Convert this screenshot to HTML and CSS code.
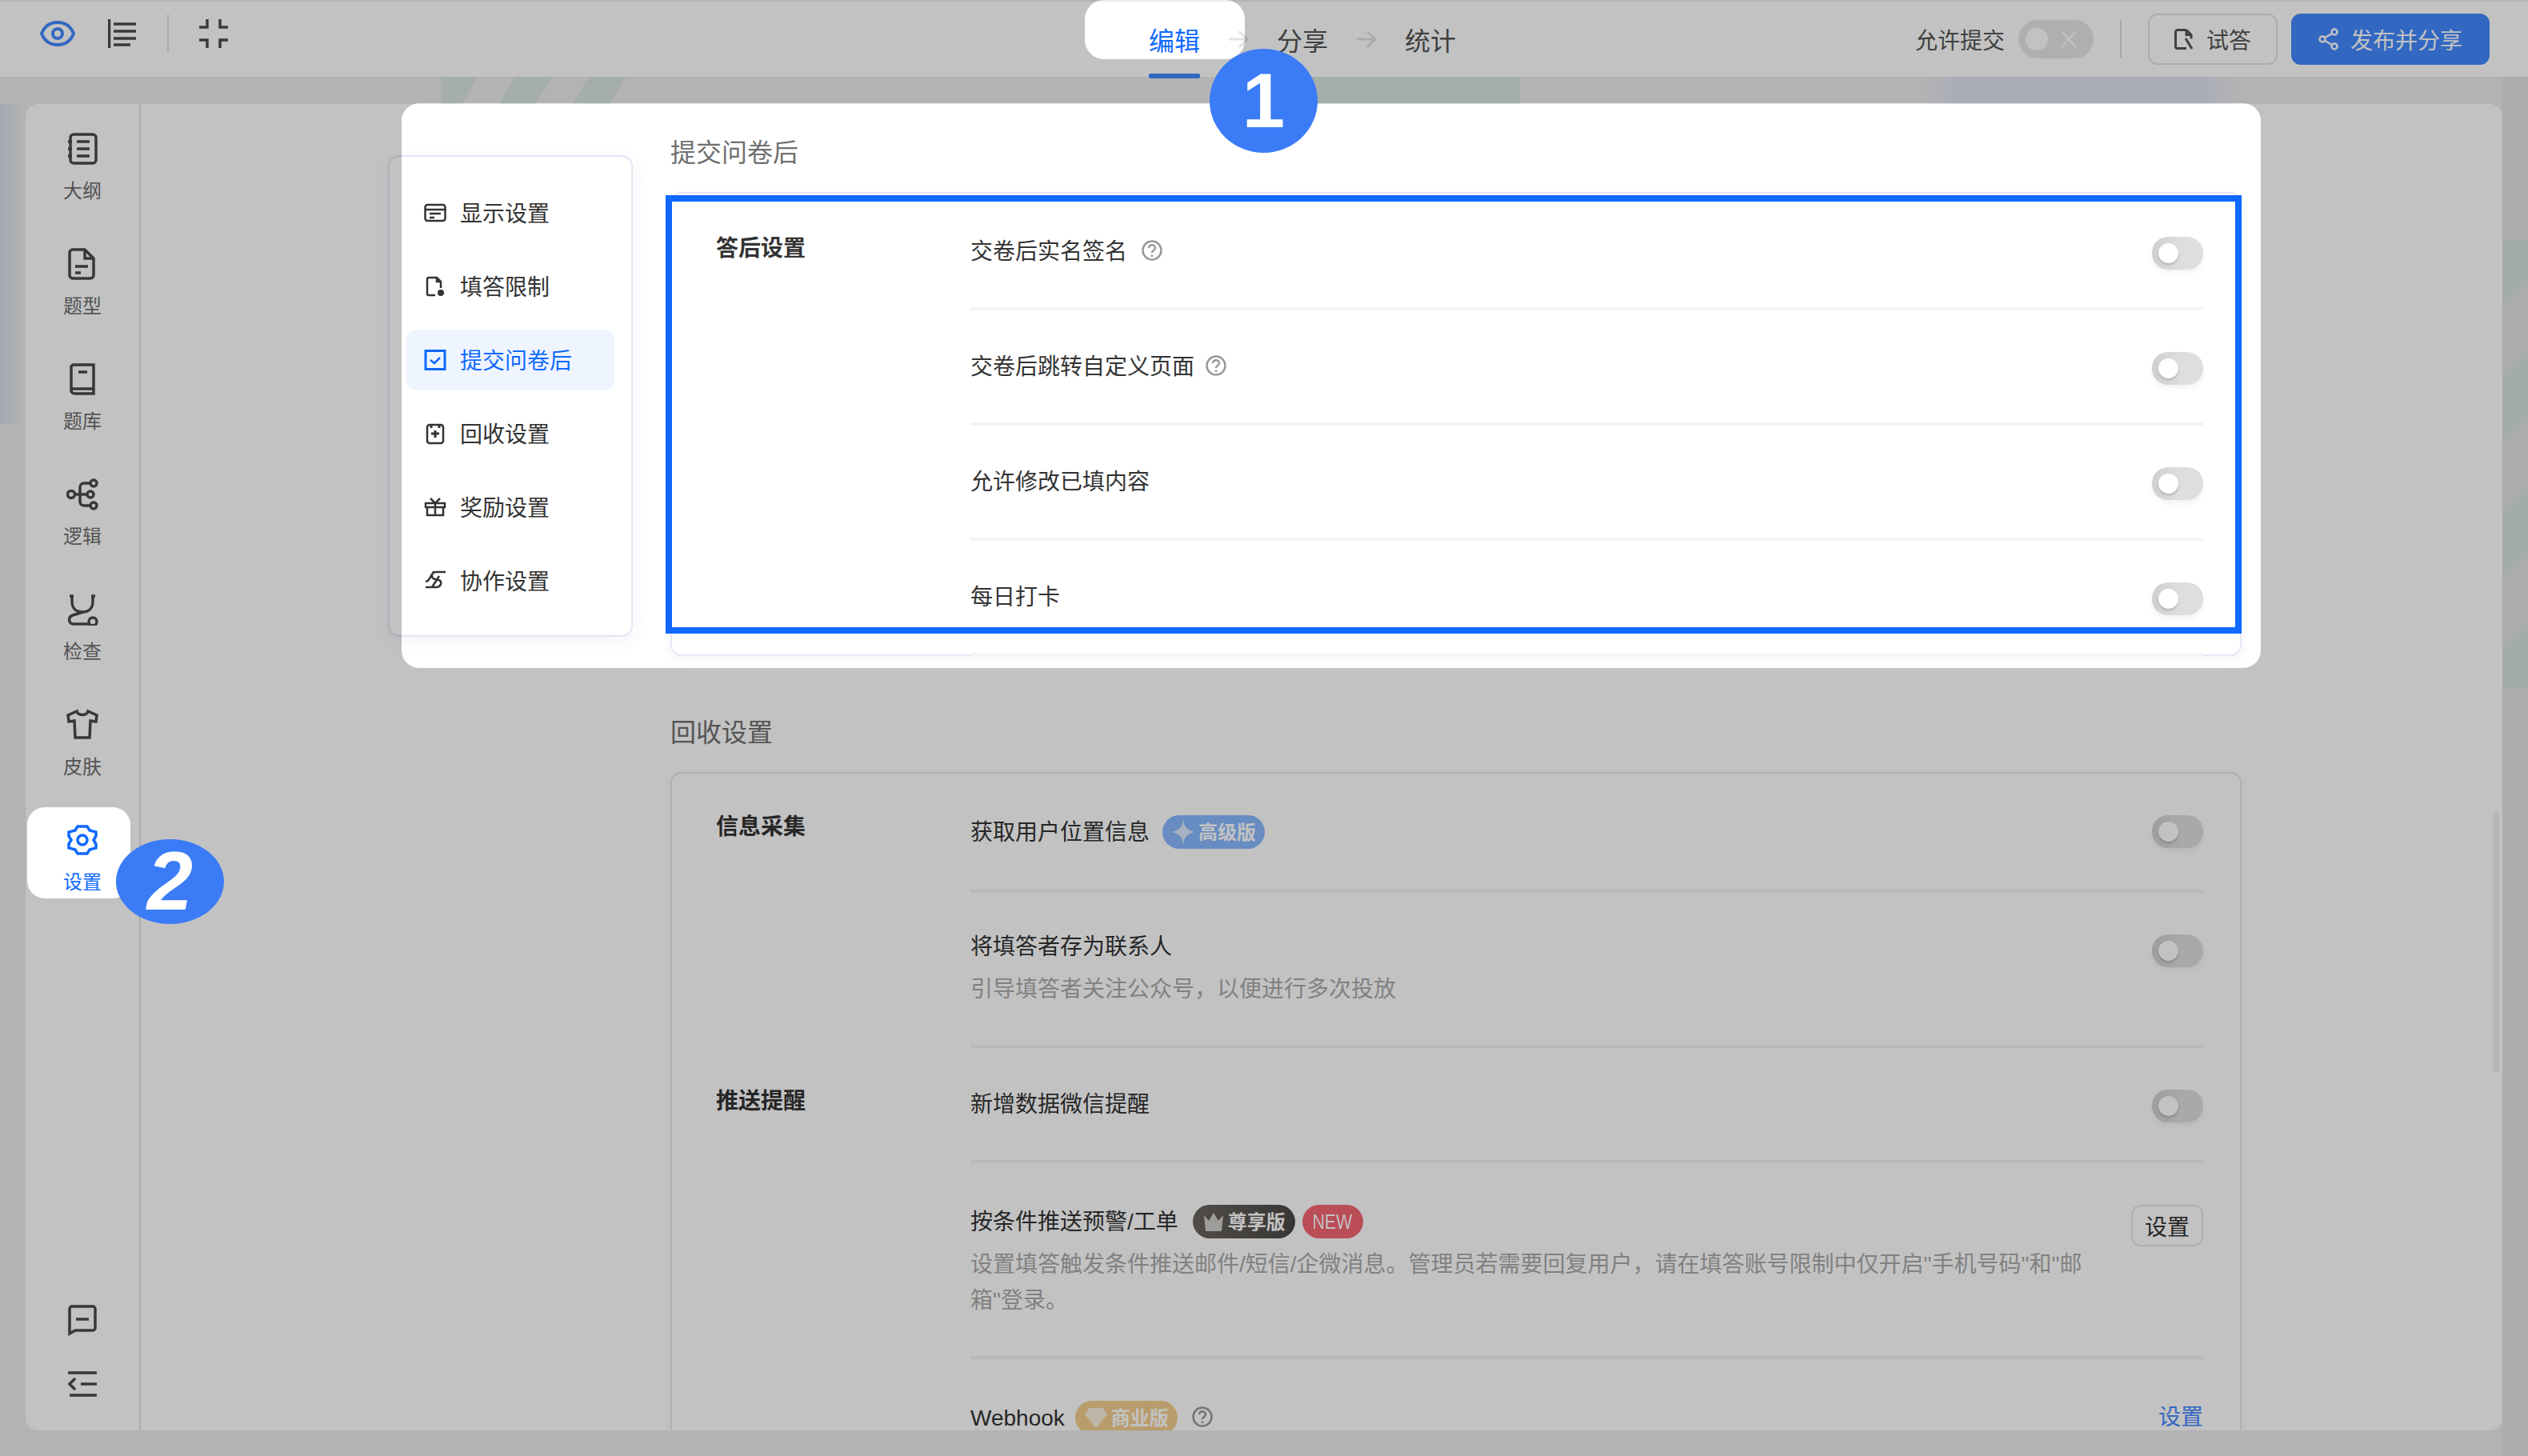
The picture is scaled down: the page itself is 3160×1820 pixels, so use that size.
FILE: index.html
```html
<!DOCTYPE html>
<html lang="zh-CN">
<head>
    <meta charset="UTF-8">
    <title>问卷设置</title>
    <link rel="stylesheet" href="styles.css">
</head>
<body>

<header class="topbar">
    <div class="topbar-left">
        <svg class="tool tool-eye" width="44" height="32" viewBox="0 0 44 32"><path d="M2 16C6 6 13 2 22 2s16 4 20 14c-4 10-11 14-20 14S6 26 2 16z"/><circle cx="22" cy="16" r="6"/></svg>
        <svg class="tool tool-outline" width="36" height="36" viewBox="0 0 36 36"><path d="M1.500 0v36M7 6h28M7 15h28M7 24h28M7 32h21" stroke-width="3.500"/></svg>
        <span class="vline"></span>
        <svg class="tool" width="36" height="36" viewBox="0 0 36 36"><path d="M10 0v10H0M26 0v10h10M10 36V26H0M26 36V26h10" stroke-width="3.500"/></svg>
    </div>
    <nav class="tabs">
        <a class="tab tab-active">编辑</a>
        <svg class="tab-arrow" width="24" height="24" viewBox="0 0 24 24"><path d="M0 12h22M13 2l10 10-10 10"/></svg>
        <a class="tab">分享</a>
        <svg class="tab-arrow" width="24" height="24" viewBox="0 0 24 24"><path d="M0 12h22M13 2l10 10-10 10"/></svg>
        <a class="tab">统计</a>
    </nav>
    <div class="topbar-right">
        <span class="allow-label">允许提交</span>
        <span class="allow-switch"><i></i>
            <svg width="24" height="24" viewBox="0 0 24 24"><path d="M3 2l18 20M21 2L3 22"/></svg>
        </span>
        <span class="vline vline-short"></span>
        <button class="btn">
            <svg width="24" height="26" viewBox="0 0 24 26"><path d="M15 1.500H4a2.500 2.500 0 0 0-2.500 2.500v18A2.500 2.500 0 0 0 4 24.500h11M15 1.500l6 6v5M15 1.500v6h6M14 12l8 13" fill="none" stroke="currentColor" stroke-width="3"/></svg>
            试答
        </button>
        <button class="btn btn-primary">
            <svg width="26" height="28" viewBox="0 0 26 28"><g fill="none" stroke="currentColor" stroke-width="2.500"><circle cx="20" cy="5" r="3.500"/><circle cx="5" cy="14" r="3.500"/><circle cx="20" cy="23" r="3.500"/><path d="M8 12l9-5M8 16l9 5"/></g></svg>
            发布并分享
        </button>
    </div>
</header>

<main class="stage">
    <div class="panel">
        <aside class="sidebar">
            <a class="side-item">
                <svg width="40" height="40" viewBox="0 0 40 40"><rect x="5" y="2" width="32" height="36" rx="4"/><path d="M13 11h16M13 20h16M13 29h16M2 11h5M2 20h5M2 29h5"/></svg>
                <span>大纲</span>
            </a>
            <a class="side-item">
                <svg width="40" height="40" viewBox="0 0 40 40"><path d="M8 2h15l11 11v21a4 4 0 0 1-4 4H8a4 4 0 0 1-4-4V6a4 4 0 0 1 4-4zM23 2v11h11M11 23h16M11 31h7"/></svg>
                <span>题型</span>
            </a>
            <a class="side-item">
                <svg width="40" height="40" viewBox="0 0 40 40"><path d="M8 2h26v36H10a4 4 0 0 1-4-4V4zM6 32h28M15 11h11"/></svg>
                <span>题库</span>
            </a>
            <a class="side-item">
                <svg width="40" height="40" viewBox="0 0 40 40"><circle cx="6" cy="20" r="4.500"/><circle cx="34" cy="6" r="4"/><circle cx="30" cy="20" r="4"/><circle cx="34" cy="34" r="4"/><path d="M11 20h15M17 20V11a5 5 0 0 1 5-5h8M17 20v9a5 5 0 0 0 5 5h8"/></svg>
                <span>逻辑</span>
            </a>
            <a class="side-item">
                <svg width="40" height="40" viewBox="0 0 40 40"><path d="M7 2v8c0 9 6 13 13 13s13-4 13-13V2M21 23L8 27c-6 2-6 11 1 11h19"/><circle cx="33" cy="35" r="5"/><path d="M4 3h5M31 3h5"/></svg>
                <span>检查</span>
            </a>
            <a class="side-item">
                <svg width="40" height="40" viewBox="0 0 40 40"><path d="M13 3L2 8l1 8 7-1 1 21h18l1-21 7 1 1-8-11-5c-1 6-13 6-14 0z"/></svg>
                <span>皮肤</span>
            </a>
            <a class="side-item side-active">
                <svg width="40" height="40" viewBox="0 0 40 40"><path d="M14 3h12l3 5 8 2 0 5-3 5 3 5 0 5-8 2-3 5H14l-3-5-8-2 0-5 3-5-3-5 0-5 8-2z"/><circle cx="20" cy="20" r="6"/></svg>
                <span>设置</span>
            </a>
            <div class="side-bottom">
                <svg width="40" height="40" viewBox="0 0 40 40"><path d="M4 6a3 3 0 0 1 3-3h26a3 3 0 0 1 3 3v24a3 3 0 0 1-3 3H11l-7 4zM12 19h16"/></svg>
                <svg width="40" height="40" viewBox="0 0 40 40"><path d="M2 6h36M18 20h20M4 34h34M11 13l-7 7 7 7"/></svg>
            </div>
        </aside>

        <div class="content">
            <ul class="setting-nav">
                <li>
                    <svg width="28" height="28" viewBox="0 0 28 28"><rect x="1.500" y="4" width="25" height="20" rx="3"/><path d="M2 10h24M7 15h14M7 20h6"/></svg>
                    显示设置
                </li>
                <li>
                    <svg width="28" height="28" viewBox="0 0 28 28"><path d="M14 25H6a2 2 0 0 1-2-2V5a2 2 0 0 1 2-2h10l5 5v8M16 3v5h5"/><circle cx="21" cy="22" r="4" class="solid"/></svg>
                    填答限制
                </li>
                <li class="nav-active">
                    <svg width="28" height="28" viewBox="0 0 28 28"><rect x="2" y="2.500" width="24" height="23" stroke-width="3"/><path d="M8 14l5 4 7-7"/></svg>
                    提交问卷后
                </li>
                <li>
                    <svg width="28" height="28" viewBox="0 0 28 28"><rect x="4" y="3" width="20" height="23" rx="3"/><path d="M9 2v5M19 2v5M9 14h10M14 10v9" stroke-width="3"/></svg>
                    回收设置
                </li>
                <li>
                    <svg width="28" height="28" viewBox="0 0 28 28"><path d="M2 9h24v5H2zM4 14v10h20V14M14 9v15M8 3l6 6 6-6"/></svg>
                    奖励设置
                </li>
                <li>
                    <svg width="28" height="28" viewBox="0 0 28 28"><path d="M27 3H15C9 3 8 11 14 12l4 1c5 1 4 8-2 9H2M19 8l-9 14M12 3L5 14l-3 1"/></svg>
                    协作设置
                </li>
            </ul>

            <div class="sections">
                <h2 class="section-title section-first">提交问卷后</h2>
                <section class="card card-first">
                    <div class="group">
                        <div class="group-label">答后设置</div>
                        <div class="group-rows">
                            <div class="row row-first">
                                <div class="row-text"><div class="row-title">交卷后实名签名
                                    <svg class="help help-far" width="26" height="26" viewBox="0 0 26 26"><circle cx="13" cy="13" r="11.500"/><path d="M9 10c0-5 8-5 8 0 0 3-4 3-4 6M13 18.500v2.500"/></svg>
                                </div></div>
                                <span class="switch"><i></i></span>
                            </div>
                            <div class="row">
                                <div class="row-text"><div class="row-title">交卷后跳转自定义页面
                                    <svg class="help" width="26" height="26" viewBox="0 0 26 26"><circle cx="13" cy="13" r="11.500"/><path d="M9 10c0-5 8-5 8 0 0 3-4 3-4 6M13 18.500v2.500"/></svg>
                                </div></div>
                                <span class="switch"><i></i></span>
                            </div>
                            <div class="row">
                                <div class="row-text"><div class="row-title">允许修改已填内容</div></div>
                                <span class="switch"><i></i></span>
                            </div>
                            <div class="row row-end">
                                <div class="row-text"><div class="row-title">每日打卡</div></div>
                                <span class="switch"><i></i></span>
                            </div>
                        </div>
                    </div>
                </section>

                <h2 class="section-title">回收设置</h2>
                <section class="card">
                    <div class="group">
                        <div class="group-label">信息采集</div>
                        <div class="group-rows">
                            <div class="row row-loose">
                                <div class="row-text"><div class="row-title row-badged">获取用户位置信息
                                    <span class="badge badge-pro">
                                        <svg width="30" height="32" viewBox="0 0 30 32"><path d="M15 0c1 10 5 14 15 16-10 2-14 6-15 16-1-10-5-14-15-16C10 14 14 10 15 0z"/></svg>
                                        高级版
                                    </span>
                                </div></div>
                                <span class="switch"><i></i></span>
                            </div>
                            <div class="row">
                                <div class="row-text row-text-desc">
                                    <div class="row-title">将填答者存为联系人</div>
                                    <p class="row-desc">引导填答者关注公众号，以便进行多次投放</p>
                                </div>
                                <span class="switch"><i></i></span>
                            </div>
                        </div>
                    </div>
                    <div class="group">
                        <div class="group-label">推送提醒</div>
                        <div class="group-rows">
                            <div class="row">
                                <div class="row-text"><div class="row-title">新增数据微信提醒</div></div>
                                <span class="switch"><i></i></span>
                            </div>
                            <div class="row">
                                <div class="row-text row-text-wide">
                                    <div class="row-title row-badged">按条件推送预警/工单
                                        <span class="badge badge-vip">
                                            <svg width="28" height="24" viewBox="0 0 28 24"><path d="M2 4l6 7 6-10 6 10 6-7-2 20H4z"/></svg>
                                            尊享版
                                        </span>
                                        <span class="badge badge-new"><span>NEW</span></span>
                                    </div>
                                    <p class="row-desc row-desc-badged">设置填答触发条件推送邮件/短信/企微消息。管理员若需要回复用户，请在填答账号限制中仅开启"手机号码"和"邮箱"登录。</p>
                                </div>
                                <button class="btn-small">设置</button>
                            </div>
                            <div class="row row-last">
                                <div class="row-text"><div class="row-title row-badged">Webhook
                                    <span class="badge badge-biz">
                                        <svg width="30" height="28" viewBox="0 0 30 28"><path d="M6 2h18l5 8-14 17L1 10z"/></svg>
                                        商业版
                                    </span>
                                    <svg class="help help-far" width="26" height="26" viewBox="0 0 26 26"><circle cx="13" cy="13" r="11.500"/><path d="M9 10c0-5 8-5 8 0 0 3-4 3-4 6M13 18.500v2.500"/></svg>
                                </div></div>
                                <a class="row-link">设置</a>
                            </div>
                        </div>
                    </div>
                </section>
            </div>
            <span class="scroll-thumb"></span>
        </div>
    </div>
</main>

<!-- guide layer: dims the page except the three highlighted spots -->
<svg class="dim" width="3160" height="1820" viewBox="0 0 3160 1820">
    <mask id="spots">
        <rect width="3160" height="1820" fill="#fff"/>
        <rect x="1356" y="0" width="200" height="74" rx="24" fill="#000"/>
        <rect x="34" y="1009" width="129" height="114" rx="22" fill="#000"/>
        <rect x="502" y="129" width="2324" height="706" rx="22" fill="#000"/>
    </mask>
    <rect width="3160" height="1820" fill="#000" fill-opacity="0.24" mask="url(#spots)"/>
</svg>
<div class="focus-box"></div>
<div class="step step-one">1</div>
<div class="step step-two">2</div>

</body>
</html>
```

FILE: styles.css
```css
* {
    box-sizing: border-box;
}

html, body {
    height: 100%;
    margin: 0;
    overflow: hidden;
}

body {
    position: relative;
    display: flex;
    flex-direction: column;
    width: 3160px;
    height: 1820px;
    font-family: "Liberation Sans", "Noto Sans CJK SC", sans-serif;
    font-size: 28px;
    color: #333;
    background-color: #ececec;
    background-image:
        linear-gradient(90deg, #d6deec, #ececec00),
        repeating-linear-gradient(120deg, #dbe5e0 0 40px, #dbe5e000 40px 80px),
        linear-gradient(#dbe5e0, #dbe5e0),
        linear-gradient(90deg, #dee4ef00, #dee4ef 12%, #dee4ef 88%, #dee4ef00),
        repeating-linear-gradient(135deg, #d6e2dc 0 60px, #d6e2dc00 60px 120px),
        linear-gradient(90deg, #e2e2e2, #e2e2e2);
    background-size: 32px 400px, 250px 34px, 260px 34px, 400px 34px, 32px 560px, 32px 1724px;
    background-position: 0 130px, 551px 96px, 1640px 96px, 2400px 96px, 3128px 300px, 3128px 96px;
    background-repeat: no-repeat;
}

/* top bar */
.topbar {
    flex: none;
    display: flex;
    align-items: center;
    height: 96px;
    padding: 0 48px 0 50px;
    background: #fff;
    border-top: 2px solid #ededed;
}

.topbar-left {
    flex: 0 0 1386px;
    display: flex;
    align-items: center;
    margin-top: -14px;
}

.tool {
    fill: none;
    stroke: #4c4c4c;
}

.tool-eye {
    stroke: #4489ff;
    stroke-width: 4;
    margin-right: 41px;
}

.tool-outline {
    margin-right: 38px;
}

.vline {
    width: 2px;
    height: 48px;
    margin-right: 38px;
    background: #ddd;
}

.vline-short {
    margin: 0 33px;
}

.tabs {
    display: flex;
    align-items: center;
    gap: 36px;
    align-self: stretch;
    font-size: 32px;
    color: #555;
}

.tab {
    position: relative;
    display: flex;
    align-items: center;
    align-self: stretch;
}

.tab-active {
    color: #0f69ff;
}

.tab-active::after {
    content: "";
    position: absolute;
    left: 0;
    right: 0;
    bottom: -2px;
    height: 6px;
    border-radius: 2px;
    background: #4489ff;
}

.tab-arrow {
    fill: none;
    stroke: #e2e2e2;
    stroke-width: 3;
}

.topbar-right {
    margin-left: auto;
    display: flex;
    align-items: center;
}

.allow-label {
    color: #555;
    margin-right: 17px;
}

.allow-switch {
    position: relative;
    display: flex;
    align-items: center;
    justify-content: space-between;
    width: 94px;
    height: 48px;
    padding: 0 19px 0 9px;
    border-radius: 24px;
    background: #e6e6e6;
}

.allow-switch i {
    width: 28px;
    height: 28px;
    border-radius: 50%;
    background: #fff;
}

.allow-switch svg {
    fill: none;
    stroke: #fff;
    stroke-width: 2.5;
}

.btn {
    display: flex;
    align-items: center;
    justify-content: center;
    gap: 16px;
    width: 162px;
    height: 64px;
    padding: 0;
    font: inherit;
    color: #555;
    background: #fff;
    border: 2px solid #e4e4e4;
    border-radius: 12px;
}

.btn-primary {
    width: 248px;
    margin-left: 17px;
    gap: 14px;
    color: #fff;
    background: #4489ff;
    border-color: #4489ff;
}

/* page frame */
.stage {
    flex: 1;
    min-height: 0;
    padding: 34px 32px 32px;
}

.panel {
    display: flex;
    height: 100%;
    background: #fff;
    border-radius: 16px;
    overflow: hidden;
}

.sidebar {
    flex: 0 0 144px;
    display: flex;
    flex-direction: column;
    align-items: center;
    padding: 15px 0 38px;
    border-right: 2px solid #e4e4e4;
}

.sidebar svg {
    fill: none;
    stroke: #4a4a4a;
    stroke-width: 3.5;
}

.side-item {
    display: flex;
    flex-direction: column;
    align-items: center;
    height: 114px;
    margin-bottom: 30px;
    padding-top: 21px;
    font-size: 24px;
    line-height: 32px;
    color: #6e6e6e;
}

.side-item span {
    margin-top: 17px;
}

.side-active {
    color: #0f69ff;
}

.side-active svg {
    stroke: #0f69ff;
}

.side-bottom {
    margin-top: auto;
    display: flex;
    flex-direction: column;
    gap: 40px;
}

.content {
    position: relative;
    flex: 1;
    min-width: 0;
    display: flex;
    align-items: flex-start;
    padding-left: 309px;
    overflow: hidden;
}

/* settings menu */
.setting-nav {
    flex: 0 0 306px;
    display: flex;
    flex-direction: column;
    gap: 16px;
    margin: 64px 0 0;
    padding: 32px 21px 30px;
    list-style: none;
    background: #fff;
    border: 2px solid #e3e8f4;
    border-radius: 14px;
    box-shadow: 0 6px 24px rgba(40, 60, 120, 0.06);
}

.setting-nav li {
    display: flex;
    align-items: center;
    gap: 17px;
    height: 76px;
    padding-left: 22px;
    padding-bottom: 3px;
    border-radius: 12px;
    color: #333;
}

.setting-nav svg {
    fill: none;
    stroke: #333;
    stroke-width: 2.5;
    margin-top: 3px;
}

.setting-nav .solid {
    fill: #333;
    stroke: none;
}

.setting-nav .nav-active {
    color: #0f69ff;
    background: #eff5ff;
}

.nav-active svg {
    stroke: #0f69ff;
}

/* settings sections */
.sections {
    flex: 0 0 1964px;
    margin-left: 47px;
}

.section-title {
    margin: 75px 0 28px;
    font-size: 32px;
    font-weight: 400;
    line-height: 42px;
    color: #707070;
}

.section-first {
    margin-top: 40px;
}

.card {
    padding-right: 46px;
    background: #fff;
    border: 2px solid #e4e8f4;
    border-radius: 14px;
    box-shadow: 0 4px 12px rgba(40, 60, 120, 0.05);
}

.group {
    display: flex;
}

.group-label {
    flex: 0 0 373px;
    padding: 47px 0 0 55px;
    font-weight: 700;
    line-height: 40px;
    color: #333;
}

.card-first .group-label {
    padding-top: 49px;
}

.group-rows {
    flex: 1;
    min-width: 0;
}

.row {
    display: flex;
    align-items: flex-start;
    justify-content: space-between;
    padding: 52px 0 47px;
    border-bottom: 4px solid #f2f4f8;
}

.row-first {
    padding-top: 54px;
}

.row-end {
    margin-bottom: -2px;
}

.row-loose {
    padding-bottom: 51px;
}

.row-last {
    border-bottom: 0;
}

.row-text-desc {
    margin-top: -3px;
}

.row-text-wide {
    width: 1410px;
}

.row-title {
    display: flex;
    align-items: center;
    line-height: 37px;
    color: #333;
}

.row-badged {
    height: 42px;
}

.row-desc {
    margin: 12px 0 0;
    line-height: 45px;
    color: #aaa;
}

.row-desc-badged {
    margin-top: 10px;
}

.help {
    margin: -3px 0 0 14px;
    fill: none;
    stroke: #999;
    stroke-width: 2.5;
}

.help-far {
    margin-left: 18px;
}

.switch {
    flex: none;
    position: relative;
    display: block;
    width: 64px;
    height: 41px;
    padding: 8px;
    border-radius: 20px;
    background: linear-gradient(90deg, #cfcfcf, #dedede 55%);
    box-shadow: 0 4px 6px rgba(0, 0, 0, 0.05);
}

.switch i {
    display: block;
    width: 25px;
    height: 25px;
    border-radius: 50%;
    background: #fff;
    box-shadow: 0 2px 3px rgba(0, 0, 0, 0.18);
}

.badge {
    display: flex;
    align-items: center;
    justify-content: center;
    gap: 4px;
    height: 42px;
    margin-left: 16px;
    border-radius: 21px;
    font-size: 24px;
    font-weight: 700;
    color: #fff;
}

.badge svg {
    fill: #fff;
    stroke: none;
    fill-opacity: 0.7;
}

.badge-pro {
    width: 128px;
    background: #88b8ff;
}

.badge-vip {
    width: 128px;
    margin-left: 18px;
    background: linear-gradient(90deg, #6a655e, #4a4846);
}

.badge-new {
    width: 76px;
    margin-left: 9px;
    font-size: 26px;
    font-weight: 400;
    background: #f56672;
}

.badge-new span {
    transform: scaleX(0.82);
}

.badge-biz {
    width: 128px;
    margin-left: 13px;
    background: #f3cd8e;
}

.btn-small {
    flex: none;
    width: 90px;
    height: 52px;
    padding: 0;
    font: inherit;
    color: #333;
    background: #fff;
    border: 2px solid #e6e6e6;
    border-radius: 12px;
}

.row-link {
    line-height: 42px;
    color: #4489ff;
}

.scroll-thumb {
    position: absolute;
    right: 4px;
    top: 886px;
    width: 8px;
    height: 324px;
    border-radius: 4px;
    background: #eee;
}

/* guide layer */
.dim {
    position: absolute;
    left: 0;
    top: 0;
}

.focus-box {
    position: absolute;
    left: 832px;
    top: 244px;
    width: 1970px;
    height: 548px;
    border: 8px solid #0f69ff;
}

.step {
    position: absolute;
    display: flex;
    align-items: center;
    justify-content: center;
    border-radius: 50%;
    font-weight: 700;
    color: #fff;
    background: #3b7bf6;
}

.step-one {
    left: 1512px;
    top: 61px;
    width: 135px;
    height: 130px;
    font-size: 96px;
}

.step-two {
    left: 145px;
    top: 1049px;
    width: 135px;
    height: 106px;
    font-size: 103px;
    font-style: italic;
}
```
